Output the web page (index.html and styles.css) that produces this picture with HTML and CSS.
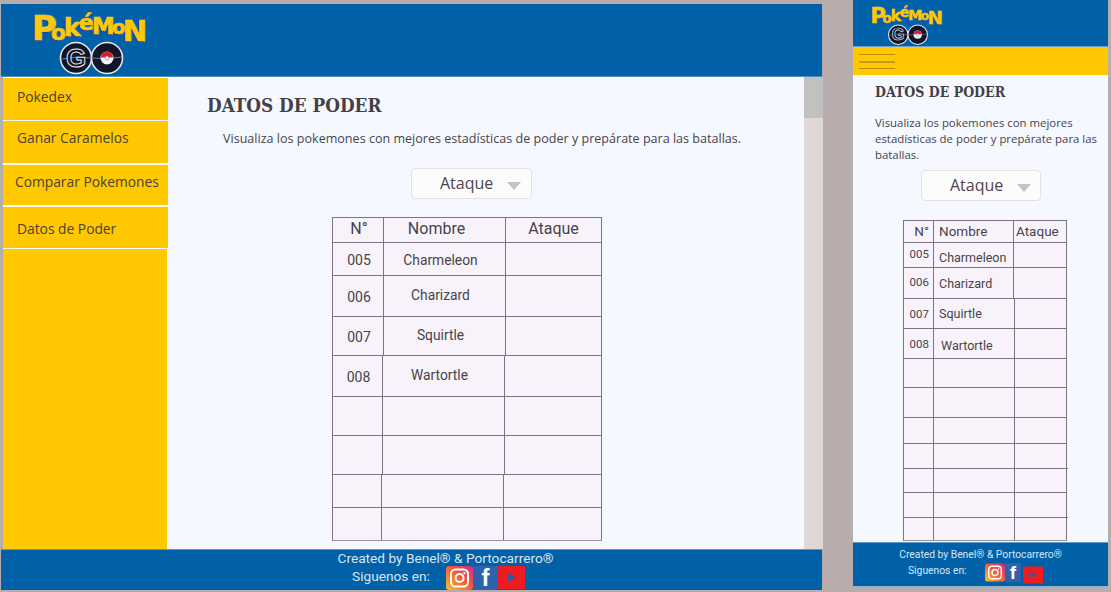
FILE: index.html
```html
<!DOCTYPE html>
<html lang="es">
<head>
<meta charset="utf-8">
<title>Datos de Poder</title>
<link rel="stylesheet" href="styles.css">
</head>
<body>
<svg class="defs" width="0" height="0" aria-hidden="true">
  <defs>
    <linearGradient id="ig" x1="0" y1="1" x2="1" y2="0">
      <stop offset="0" stop-color="#fdc030"/>
      <stop offset=".5" stop-color="#f56030"/>
      <stop offset="1" stop-color="#d02a90"/>
    </linearGradient>
    <symbol id="logo" viewBox="0 0 120 70">
      <text class="logo-word">
        <tspan x="2" y="34" font-size="34">P</tspan><tspan x="21" y="34" font-size="22">o</tspan><tspan x="34" y="30" font-size="25">k</tspan><tspan x="49" y="24" font-size="22">é</tspan><tspan x="62" y="28" font-size="23">M</tspan><tspan x="82" y="28" font-size="20">o</tspan><tspan x="93" y="35" font-size="29">N</tspan>
      </text>
      <circle class="go-disc" cx="46" cy="52" r="15.5"/>
      <circle class="go-disc" cx="77" cy="52" r="15.5"/>
      <path class="go-line" d="M32 53 Q46 50 62 52 Q76 54 92 51"/>
      <text class="go-letter" x="46" y="61">G</text>
      <circle class="ball" cx="77" cy="52" r="6.5"/>
      <path class="ball-top" d="M71 51.5a6 6 0 0 1 12 0z"/>
      <circle class="ball-eye" cx="77" cy="52" r="2"/>
    </symbol>
    <symbol id="insta" viewBox="0 0 27 24">
      <rect width="27" height="24" rx="3" fill="url(#ig)"/>
      <rect x="5" y="3.5" width="17" height="17" rx="4.5" fill="none" stroke="#fff" stroke-width="2"/>
      <circle cx="13.5" cy="12" r="4" fill="none" stroke="#fff" stroke-width="2"/>
      <circle cx="18.4" cy="7.2" r="1.1" fill="#fff"/>
    </symbol>
    <symbol id="yt" viewBox="0 0 27 23">
      <rect width="27" height="23" rx="1" fill="#ee1c20"/>
      <path d="M10 7 18 11.5 10 16z" fill="#2a5aa8"/>
    </symbol>
  </defs>
</svg>

<section class="frame frame-desk">
  <header class="top top-desk">
    <svg class="logo logo-desk" aria-label="Pokémon GO"><use href="#logo"/></svg>
  </header>
  <div class="body-desk">
    <nav class="side">
      <a class="nav-item nav-a">Pokedex</a>
      <a class="nav-item nav-b">Ganar Caramelos</a>
      <a class="nav-item nav-c">Comparar Pokemones</a>
      <a class="nav-item nav-d">Datos de Poder</a>
      <div class="side-fill"></div>
    </nav>
    <main class="main main-desk">
      <h1 class="title title-desk">DATOS DE PODER</h1>
      <p class="lead lead-desk">Visualiza los pokemones con mejores estadísticas de poder y prepárate para las batallas.</p>
      <div class="select select-desk"><span>Ataque</span><i class="caret"></i></div>
      <table class="grid grid-desk">
        <tbody>
          <tr class="dr d0 h24"><th>N°</th><th class="nm">Nombre</th><th>Ataque</th></tr>
          <tr class="dr d0 h33"><td>005</td><td class="nm">Charmeleon</td><td></td></tr>
          <tr class="dr d1 h41"><td>006</td><td class="nm up">Charizard</td><td></td></tr>
          <tr class="dr d1 h39"><td>007</td><td class="nm up">Squirtle</td><td></td></tr>
          <tr class="dr d2 h41"><td>008</td><td class="nm up">Wartortle</td><td></td></tr>
          <tr class="dr d3 h39"><td></td><td></td><td></td></tr>
          <tr class="dr d3 h39"><td></td><td></td><td></td></tr>
          <tr class="dr d4 h33"><td></td><td></td><td></td></tr>
          <tr class="dr d4 h33"><td></td><td></td><td></td></tr>
        </tbody>
      </table>
    </main>
    <div class="scroll"><div class="thumb"></div></div>
  </div>
  <footer class="foot foot-desk">
    <div class="foot-line">Created by Benel® &amp; Portocarrero®</div>
    <div class="foot-follow">
      <span class="follow-text">Siguenos en:</span>
      <svg class="ic-i"><use href="#insta"/></svg>
      <span class="fb">f</span>
      <svg class="ic-y"><use href="#yt"/></svg>
    </div>
  </footer>
</section>

<section class="frame frame-mob">
  <header class="top top-mob">
    <svg class="logo logo-mob" aria-label="Pokémon GO"><use href="#logo"/></svg>
  </header>
  <div class="menu"><span class="bar"></span><span class="bar bar-mid"></span><span class="bar"></span></div>
  <main class="main main-mob">
    <h1 class="title title-mob">DATOS DE PODER</h1>
    <p class="lead lead-mob">Visualiza los pokemones con mejores estadísticas de poder y prepárate para las batallas.</p>
    <div class="select select-mob"><span>Ataque</span><i class="caret"></i></div>
    <table class="grid grid-mob">
      <tbody>
        <tr class="mr m0 h21"><th class="mn">N°</th><th class="ml">Nombre</th><th class="ml2">Ataque</th></tr>
        <tr class="mr m0 h25"><td class="mn hi">005</td><td class="ml ml-t">Charmeleon</td><td></td></tr>
        <tr class="mr m0 h31"><td class="mn hi">006</td><td class="ml">Charizard</td><td></td></tr>
        <tr class="mr m1 h30"><td class="mn">007</td><td class="ml">Squirtle</td><td></td></tr>
        <tr class="mr m1 h30"><td class="mn">008</td><td class="ml ml-w">Wartortle</td><td></td></tr>
        <tr class="mr m1 h29"><td></td><td></td><td></td></tr>
        <tr class="mr m1 h30"><td></td><td></td><td></td></tr>
        <tr class="mr m1 h26"><td></td><td></td><td></td></tr>
        <tr class="mr m1 h25"><td></td><td></td><td></td></tr>
        <tr class="mr m1 h24 over"><td></td><td></td><td></td></tr>
        <tr class="mr m1 h25"><td></td><td></td><td></td></tr>
        <tr class="mr m1 h23 over"><td></td><td></td><td></td></tr>
      </tbody>
    </table>
  </main>
  <footer class="foot foot-mob">
    <div class="foot-line">Created by Benel® &amp; Portocarrero®</div>
    <div class="foot-follow">
      <span class="follow-text">Siguenos en:</span>
      <svg class="ic-i"><use href="#insta"/></svg>
      <span class="fb">f</span>
      <svg class="ic-y"><use href="#yt"/></svg>
    </div>
  </footer>
</section>
</body>
</html>
```
FILE: styles.css
```css
* { box-sizing: border-box; }
html, body { margin: 0; height: 100%; }
body {
  position: relative;
  width: 1111px;
  height: 592px;
  overflow: hidden;
  background: #b9acad;
  color: #444046;
  font-family: "Open Sans", sans-serif;
}
.defs { position: absolute; }

/* two artboards on a free canvas */
.frame { position: absolute; display: flex; flex-direction: column; overflow: hidden; }
.frame-desk { left: 1px; top: 4px; width: 823px; height: 586px; }
.frame-mob { left: 853px; top: 0; width: 255px; height: 587px; background: #f5f8ff; }

.top { background: #0060a8; flex: none; }
.top-desk { height: 73px; width: 821px; padding: 2px 0 0 29px; border-bottom: 1px solid #4f8fc4; }
.top-mob { height: 47px; padding: 2px 0 0 16px; border-bottom: 1px solid #6d9fc8; }
.logo { display: block; overflow: visible; }
.logo-desk { width: 120px; height: 70px; }
.logo-mob { width: 76px; height: 44px; }
.logo-word {
  font-family: "DejaVu Sans", "Liberation Sans", sans-serif;
  font-weight: 700;
  fill: #fcc80c;
  stroke: #fcc80c;
  stroke-width: .7px;
  stroke-linejoin: round;
  filter: drop-shadow(-1px 1.5px 0 #1f4596) drop-shadow(1px 0 0 #3f78c4);
}
.go-disc { fill: #101628; stroke: #e8e8ee; stroke-width: 1.6px; }
.go-line { fill: none; stroke: #7f8fd0; stroke-width: .8px; }
.go-letter {
  font-family: "Liberation Sans", sans-serif;
  font-weight: 700;
  font-size: 26px;
  text-anchor: middle;
  fill: #101628;
  stroke: #e8e8ee;
  stroke-width: 1px;
}
.ball { fill: #f4f4f4; }
.ball-top { fill: #d81e2c; }
.ball-eye { fill: #fff; stroke: #555; stroke-width: .5px; }

/* desktop body */
.body-desk { flex: 1; display: flex; min-height: 0; }
.side { width: 165px; margin-left: 2px; flex: none; display: flex; flex-direction: column; background: #fff; }
.nav-item {
  display: block;
  background: #ffc800;
  font-size: 13.8px;
  line-height: 19px;
  color: #4a4338;
  padding-left: 14px;
  box-shadow: 1px 0 1px #e6e6e6;
}
.nav-a { height: 42px; margin-top: 1px; padding-top: 9px; }
.nav-b { height: 42px; margin-top: 1px; padding-top: 7px; }
.nav-c { height: 40px; margin-top: 2px; padding-top: 6px; padding-left: 12px; border-top: 1px solid #e8c458; }
.nav-d { height: 41px; margin-top: 2px; padding-top: 11px; border-top: 1px solid #e8c458; }
.side-fill { flex: 1; margin-top: 1px; margin-right: 1px; background: #ffc800; }

.main { background: #f5f8ff; }
.main-desk { width: 636px; flex: none; padding-top: 15px; overflow: hidden; }
.main-mob { flex: 1; overflow: hidden; padding-top: 7px; }

.scroll { width: 19px; flex: none; background: #e0d8d8; }
.thumb { height: 41px; background: #c1c1c1; }

.title {
  margin: 0;
  font-family: "DejaVu Serif Condensed", "DejaVu Serif", serif;
  font-weight: 700;
  color: #444046;
  letter-spacing: 0;
}
.title-desk { font-size: 18.8px; line-height: 26px; padding-left: 39px; }
.title-mob { font-size: 14px; line-height: 20px; padding-left: 22px; }
.lead { margin: 0; color: #48444c; }
.lead-desk { font-size: 12.57px; line-height: 18px; margin-top: 12px; padding-left: 55px; white-space: nowrap; }
.lead-mob { font-size: 11.4px; line-height: 16px; margin-top: 13px; padding: 0 8px 0 22px; }

.select {
  display: flex;
  align-items: center;
  background: #fdfcfd;
  border: 1px solid #e4e0e4;
  border-radius: 4px;
  font-size: 16px;
  color: #4a464c;
}
.select-desk { width: 121px; height: 31px; margin: 20px 0 0 243px; padding-left: 28px; }
.select-mob { width: 120px; height: 31px; margin: 7px 0 0 68px; padding-left: 28px; }
.select span { position: relative; top: -1px; }
.caret {
  margin-left: 14px;
  margin-top: 4px;
  width: 0;
  height: 0;
  border-left: 7.5px solid transparent;
  border-right: 7.5px solid transparent;
  border-top: 8px solid #c3c3c3;
}

.grid {
  display: block;
  background: #f8f3fb;
  border: 1px solid #7c7480;
  border-bottom-color: #9a929e;
  border-collapse: collapse;
  font-family: "Roboto", sans-serif;
  color: #47434b;
}
.grid tbody { display: block; }
.grid tr { display: grid; border-top: 1px solid #7c7480; }
.grid tr:first-child { border-top: 0; }
.grid th, .grid td {
  display: flex;
  align-items: center;
  justify-content: center;
  font-weight: 400;
  padding: 0;
  border-left: 1px solid #7c7480;
}
.grid th:first-child, .grid td:first-child { border-left: 0; }

.grid-desk { width: 270px; height: 324px; margin: 18px 0 0 164px; }
.grid-desk th { font-size: 16px; padding-bottom: 4px; }
.grid-desk th:first-child { padding-left: 2px; }
.grid-desk td { font-size: 14px; padding-top: 1px; }
.grid-desk td:first-child { padding-left: 2px; }
.grid-desk th.nm { padding-right: 16px; }
.grid-desk td.nm { font-size: 13.8px; padding: 2px 8px 0 0; }
.grid-desk td.up { padding: 0 8px 2px 0; }
.d0 { grid-template-columns: 50px 122px 1fr; }
.d1 { grid-template-columns: 50px 122px 1fr; }
.d2 { grid-template-columns: 49px 122px 1fr; }
.d3 { grid-template-columns: 49px 122px 1fr; }
.d4 { grid-template-columns: 48px 122px 1fr; }

.h21 { height: 21px; }
.h23 { height: 23px; }
.h24 { height: 24px; }
.h25 { height: 25px; }
.h26 { height: 26px; }
.h29 { height: 29px; }
.h30 { height: 30px; }
.h31 { height: 31px; }
.h33 { height: 33px; }
.h39 { height: 39px; }
.h41 { height: 41px; }

.grid-mob { width: 164px; height: 321px; margin: 19px 0 0 50px; }
.grid-mob th { font-size: 13.5px; padding-bottom: 1px; }
.grid-mob td { font-size: 12.5px; }
.m0 { grid-template-columns: 29px 80px 1fr; }
.m1 { grid-template-columns: 29px 81px 1fr; }
.over { margin-right: -2px; }
.grid-mob .mn { justify-content: flex-end; padding-right: 4px; }
.grid-mob td.mn { font-size: 11.5px; }
.grid-mob .hi { padding-bottom: 3px; }
.grid-mob .ml { justify-content: flex-start; padding-left: 5px; }
.grid-mob .ml2 { justify-content: flex-start; padding-left: 2px; }
.grid-mob .ml-t { padding-top: 4px; }
.grid-mob .ml-w { padding: 3px 0 0 7px; }

.foot { background: #0060a8; color: #d9e6f3; font-family: "Roboto", sans-serif; flex: none; border-top: 1px solid #5f97c6; }
.foot-desk { width: 821px; height: 41px; font-size: 13.7px; }
.foot-mob { height: 45px; font-size: 10.3px; border-bottom: 1px solid #8fb4d4; }
.foot-line { text-align: center; white-space: nowrap; }
.foot-follow { display: flex; align-items: flex-start; }
.foot-desk .foot-line { line-height: 16px; margin-left: 68px; }
.foot-desk .foot-follow { padding-left: 351px; }
.foot-desk .follow-text { width: 94px; line-height: 20px; }
.foot-desk .ic-i { width: 27px; height: 24px; }
.foot-desk .ic-y { width: 27px; height: 23px; }
.foot-desk .fb { width: 25px; height: 24px; font-size: 24px; line-height: 24px; }
.foot-mob .foot-line { line-height: 14px; padding-top: 5px; }
.foot-mob .foot-follow { padding-left: 55px; margin-top: -1px; }
.foot-mob .follow-text { width: 77px; line-height: 18px; margin-top: 1px; }
.foot-mob .ic-i { width: 20px; height: 19px; margin-top: 2px; }
.foot-mob .ic-y { width: 20px; height: 18px; margin: 5px 0 0 2px; }
.foot-mob .fb { width: 16px; height: 19px; font-size: 19px; line-height: 19px; margin-top: 2px; }
.fb {
  display: block;
  background: #2f62ad;
  color: #fff;
  font-family: "Liberation Sans", sans-serif;
  font-weight: 700;
  text-align: center;
}

.menu { height: 28px; flex: none; background: #ffc800; display: flex; flex-direction: column; padding: 7px 0 0 6px; }
.bar { display: block; width: 36px; height: 1px; background: #b88f10; margin-bottom: 5.5px; }
.bar-mid { height: 2px; margin-bottom: 5px; background: #c69a10; }
```
